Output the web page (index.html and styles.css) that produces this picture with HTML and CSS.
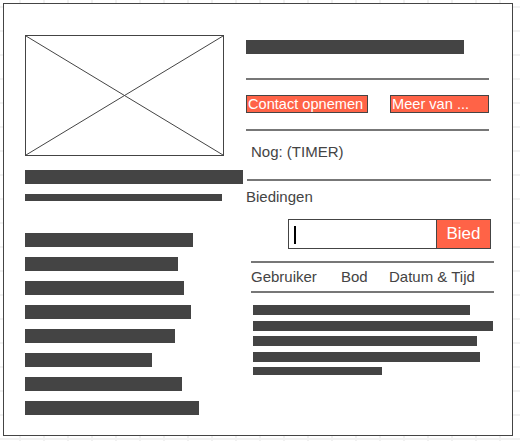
FILE: index.html
```html
<!DOCTYPE html>
<html lang="nl">
<head>
    <meta charset="UTF-8">
    <meta name="viewport" content="width=device-width, initial-scale=1.0">
    <title>Veiling - Wireframe</title>
    <link rel="stylesheet" href="styles.css">
</head>
<body>
    <div class="frame">
        <aside class="left">
            <div class="photo">
                <svg viewBox="0 0 100 100" preserveAspectRatio="none">
                    <line x1="0" y1="0" x2="100" y2="100" vector-effect="non-scaling-stroke"></line>
                    <line x1="100" y1="0" x2="0" y2="100" vector-effect="non-scaling-stroke"></line>
                </svg>
            </div>
            <div class="bar bar-heading"></div>
            <div class="bar bar-sub"></div>
            <div class="specs">
                <div class="bar" style="width: 168px"></div>
                <div class="bar" style="width: 153px"></div>
                <div class="bar" style="width: 159px"></div>
                <div class="bar" style="width: 166px"></div>
                <div class="bar" style="width: 150px"></div>
                <div class="bar" style="width: 127px"></div>
                <div class="bar" style="width: 157px"></div>
                <div class="bar" style="width: 174px"></div>
            </div>
        </aside>

        <main class="right">
            <div class="bar bar-title"></div>
            <div class="rule rule-top"></div>
            <div class="actions">
                <button class="btn btn-contact">Contact opnemen</button>
                <button class="btn btn-more">Meer van ...</button>
            </div>
            <div class="rule rule-mid"></div>
            <p class="timer">Nog: (TIMER)</p>
            <div class="rule rule-bids"></div>
            <h3 class="bids-title">Biedingen</h3>
            <form class="bid-form" onsubmit="return false">
                <div class="bid-input"><span class="caret"></span></div>
                <button class="bid-btn">Bied</button>
            </form>
            <div class="rule rule-table"></div>
            <div class="table-head">
                <span>Gebruiker</span>
                <span>Bod</span>
                <span>Datum &amp; Tijd</span>
            </div>
            <div class="rule rule-table rule-head"></div>
            <div class="rows">
                <div class="bar" style="width: 217px"></div>
                <div class="bar" style="width: 240px"></div>
                <div class="bar" style="width: 224px"></div>
                <div class="bar" style="width: 227px"></div>
                <div class="bar bar-last" style="width: 129px"></div>
            </div>
        </main>
    </div>
</body>
</html>
```

FILE: styles.css
```css
* {
    box-sizing: border-box;
    font-family: "Liberation Sans", Arial, sans-serif;
}

body {
    margin: 0;
    padding: 3px;
    background-color: #fff;
    background-image:
        linear-gradient(to right, #f1f1f1 2px, transparent 2px),
        linear-gradient(to bottom, #f1f1f1 2px, transparent 2px);
    background-size: 24px 24px;
    background-position: 19px 6px;
}

.frame {
    display: flex;
    align-items: flex-start;
    width: 510px;
    height: 433px;
    padding: 31px 0 0 21px;
    border: 1px solid #444;
    background: #fff;
}

.bar {
    background: #444;
}

/* left column */
.left {
    display: flex;
    flex-direction: column;
    width: 218px;
}

.photo {
    width: 199px;
    height: 121px;
    border: 1px solid #444;
}

.photo svg {
    display: block;
    width: 100%;
    height: 100%;
}

.photo line {
    stroke: #444;
    stroke-width: 1;
}

.bar-heading {
    margin-top: 14px;
    width: 218px;
    height: 14px;
}

.bar-sub {
    margin-top: 10px;
    width: 197px;
    height: 7px;
}

.specs {
    display: flex;
    flex-direction: column;
    gap: 10px;
    margin-top: 32px;
}

.specs .bar {
    height: 14px;
}

/* right column */
.right {
    display: flex;
    flex-direction: column;
    width: 248px;
    margin-left: 3px;
    color: #444;
    font-size: 15px;
}

.bar-title {
    margin-top: 5px;
    width: 218px;
    height: 14px;
}

.rule {
    height: 2px;
    background: #777;
}

.rule-top {
    margin-top: 24px;
    width: 243px;
}

.actions {
    display: flex;
    gap: 22px;
    margin-top: 15px;
}

.btn {
    height: 18px;
    padding: 0 0 0 1px;
    border: 1px solid #444;
    background: #ff6347;
    color: #fff;
    font-size: 14.6px;
    line-height: 16px;
    text-align: left;
    white-space: nowrap;
    overflow: hidden;
    cursor: pointer;
}

.btn-contact {
    width: 122px;
}

.btn-more {
    width: 99px;
}

.rule-mid {
    margin-top: 16px;
    width: 243px;
}

.timer {
    margin: 12px 0 0 5px;
    line-height: 18px;
}

.rule-bids {
    margin: 18px 0 0 1px;
    width: 244px;
}

.bids-title {
    margin: 7px 0 0;
    font-size: 15px;
    font-weight: normal;
    line-height: 18px;
}

.bid-form {
    display: flex;
    margin: 13px 0 0 42px;
    width: 203px;
    height: 30px;
}

.bid-input {
    display: flex;
    align-items: center;
    flex: 1;
    padding: 2px 0 0 5px;
    border: 1px solid #444;
}

.caret {
    width: 2px;
    height: 18px;
    background: #000;
}

.bid-btn {
    width: 54px;
    border: 1px solid #444;
    border-left: none;
    background: #ff6347;
    color: #fff;
    font-size: 17px;
    cursor: pointer;
}

.rule-table {
    margin: 12px 0 0 5px;
    width: 243px;
}

.table-head {
    display: grid;
    grid-template-columns: 90px 48px auto;
    margin: 5px 0 0 5px;
    line-height: 18px;
}

.rule-head {
    margin-top: 5px;
}

.rows {
    display: flex;
    flex-direction: column;
    gap: 5.5px;
    margin: 12px 0 0 7px;
}

.rows .bar {
    height: 10px;
}

.rows .bar-last {
    height: 8px;
}
```
